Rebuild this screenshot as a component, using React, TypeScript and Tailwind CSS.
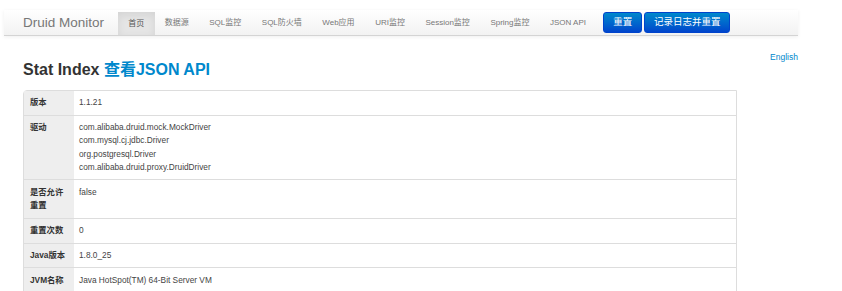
import React from "react";

const navItems = [
  "首页",
  "数据源",
  "SQL监控",
  "SQL防火墙",
  "Web应用",
  "URI监控",
  "Session监控",
  "Spring监控",
  "JSON API",
];

const rows: { label: string; value: string[] }[] = [
  { label: "版本", value: ["1.1.21"] },
  {
    label: "驱动",
    value: [
      "com.alibaba.druid.mock.MockDriver",
      "com.mysql.cj.jdbc.Driver",
      "org.postgresql.Driver",
      "com.alibaba.druid.proxy.DruidDriver",
    ],
  },
  { label: "是否允许重置", value: ["false"] },
  { label: "重置次数", value: ["0"] },
  { label: "Java版本", value: ["1.8.0_25"] },
  { label: "JVM名称", value: ["Java HotSpot(TM) 64-Bit Server VM"] },
];

export default function App() {
  return (
    <div className="w-[842px] h-[291px] overflow-hidden bg-white font-['Liberation_Sans','Noto_Sans_CJK_SC',sans-serif] text-[#333]">
      <div className="pt-[10px] pl-[4px] w-[798px]">
        <nav className="h-[26px] flex items-stretch bg-gradient-to-b from-white to-[#f2f2f2] border-b border-[#d4d4d4] shadow-[0_1px_4px_rgba(0,0,0,0.065)]">
          <span className="pl-[19px] pr-[14px] text-[13.5px] leading-[26px] text-[#777]">Druid Monitor</span>
          <div className="flex items-stretch">
            {navItems.map((item, i) => (
              <span
                key={item}
                className={
                  i === 0
                    ? "px-[10.25px] text-[8px] leading-[24px] mt-[2px] text-[#555] bg-[#e5e5e5] shadow-[inset_0_3px_8px_rgba(0,0,0,0.08)]"
                    : "px-[10.25px] text-[8px] leading-[26px] text-[#777]"
                }
              >
                {item}
              </span>
            ))}
          </div>
          <div className="flex items-center gap-[2px] ml-[7px]">
            <span className="h-[21px] w-[39px] flex items-center justify-center rounded-[3px] text-white text-[9.5px] bg-gradient-to-b from-[#0088cc] to-[#0044cc] border border-[#0044cc]">
              重置
            </span>
            <span className="h-[21px] w-[86px] flex items-center justify-center rounded-[3px] text-white text-[9.5px] bg-gradient-to-b from-[#0088cc] to-[#0044cc] border border-[#0044cc]">
              记录日志并重置
            </span>
          </div>
        </nav>
      </div>
      <div className="w-[798px] flex justify-end mt-[15px]">
        <span className="text-[8.5px] text-[#0088cc]">English</span>
      </div>
      <div className="pl-[23px]">
        <h1 className="text-[16px] font-bold leading-[20px] -mt-[4px]">
          Stat Index <span className="text-[#0088cc]">查看JSON API</span>
        </h1>
        <table className="mt-[10px] w-[714px] border-separate border-spacing-0 border border-[#ddd] rounded-tl-[4px] text-[8.3px] leading-[13.3px]">
          <tbody>
            {rows.map((row, i) => (
              <tr key={row.label}>
                <td
                  className={
                    "w-[50px] align-top pl-[6px] pr-[3px] py-[5.3px] bg-[#eee] font-bold text-[#333] " +
                    (i > 0 ? "border-t border-[#ddd]" : "")
                  }
                >
                  {row.label}
                </td>
                <td
                  className={
                    "align-top px-[5px] py-[5.3px] text-[#444] " +
                    (i > 0 ? "border-t border-[#ddd]" : "")
                  }
                >
                  {row.value.map((v) => (
                    <div key={v}>{v}</div>
                  ))}
                </td>
              </tr>
            ))}
          </tbody>
        </table>
      </div>
    </div>
  );
}
